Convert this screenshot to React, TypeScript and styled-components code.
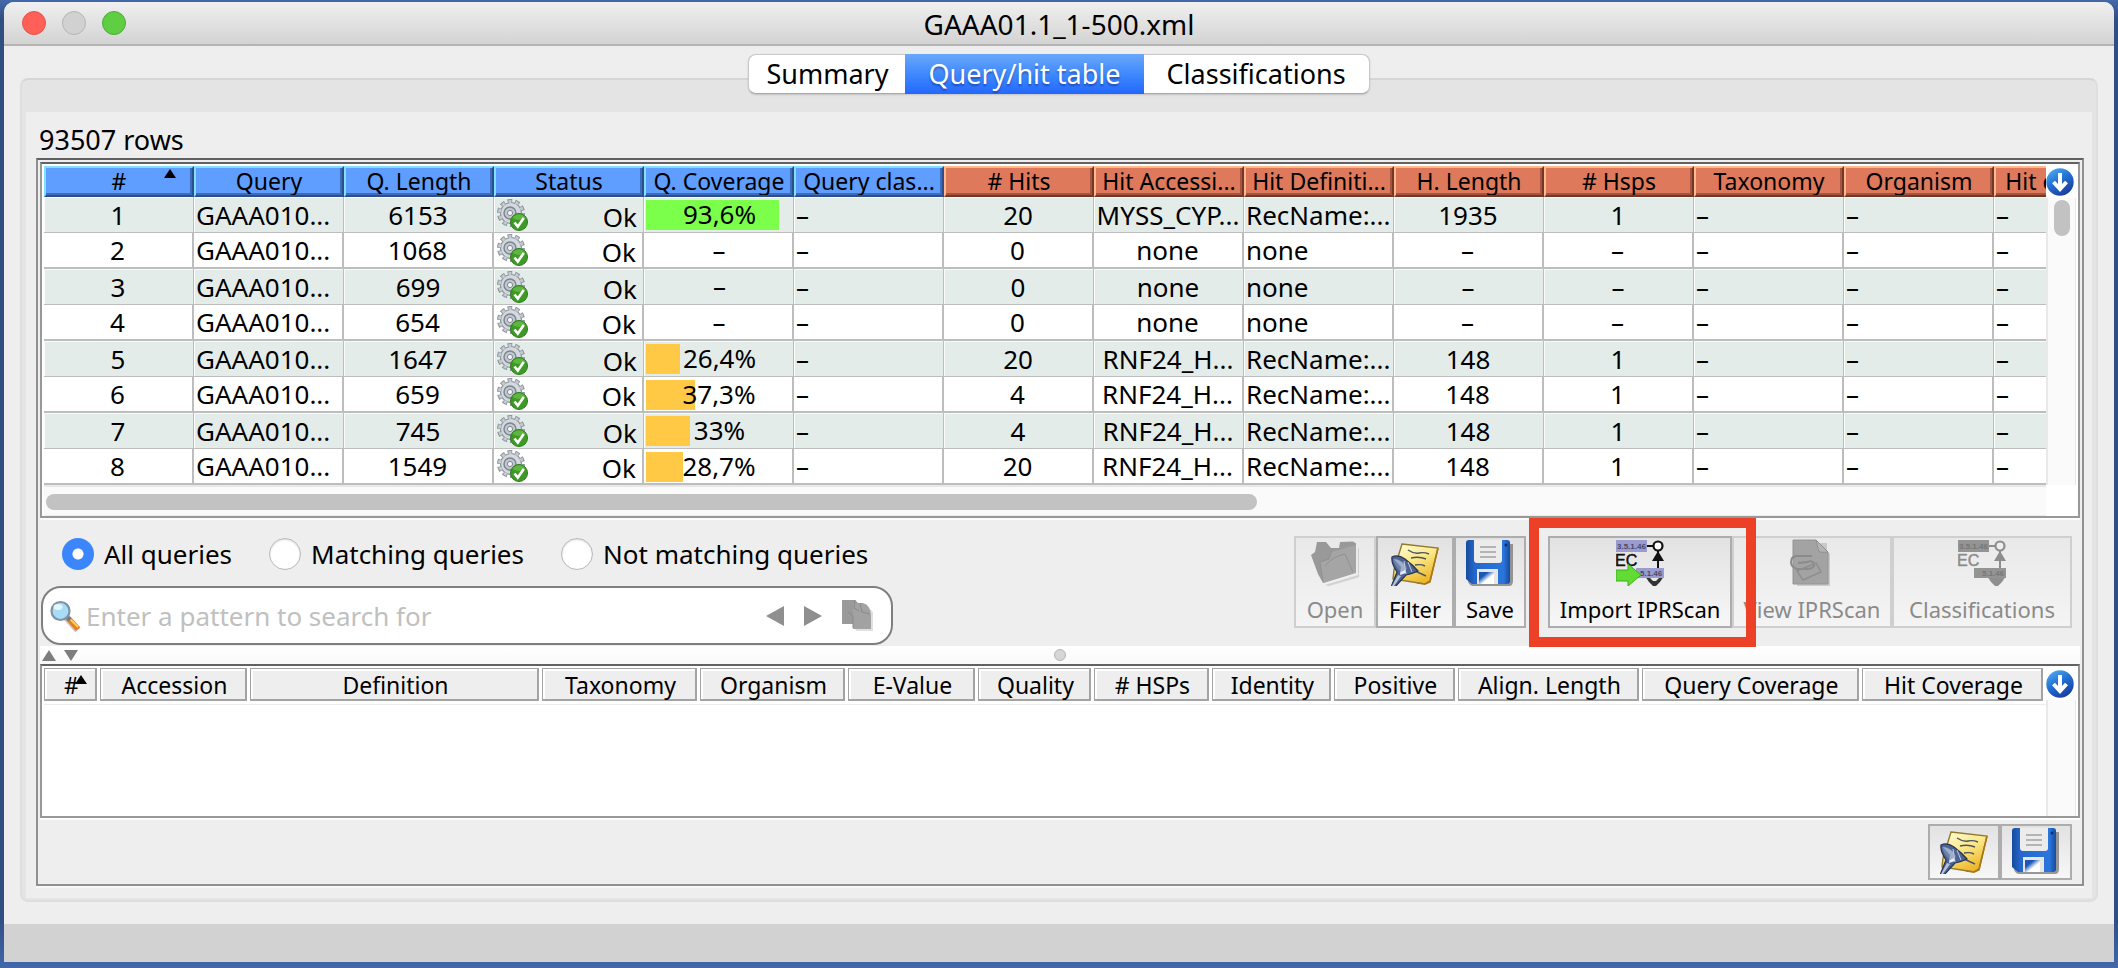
import React, { useState } from 'react';
import styled, { createGlobalStyle, css } from 'styled-components';

const GlobalStyle = createGlobalStyle`
  *, *::before, *::after { box-sizing: border-box; }
  body { margin: 0; font-family: "Noto Sans", "Open Sans", sans-serif; color: #000; }
  button, input { font-family: inherit; color: inherit; margin: 0; }
  svg { display: block; }
`;

const Desktop = styled.div`
  min-height: 100vh;
  padding: 2px 4px 6px;
  display: flex;
  background: linear-gradient(#4569a8 0, #2f4e82 20px, #2f4e82 calc(100% - 50px), #4268ab 100%);
`;

const Window = styled.div`
  flex: 1;
  min-width: 0;
  display: flex;
  flex-direction: column;
  overflow: hidden;
  background: #eeeeee;
  border-radius: 10px 10px 0 0;
`;

const TitleBar = styled.header`
  display: grid;
  grid-template-columns: 1fr auto 1fr;
  align-items: center;
  height: 44px;
  padding: 0 18px;
  background: linear-gradient(#f0f0f0, #d3d3d3);
  border-bottom: 2px solid #b4b4b4;
`;

const Lights = styled.div`
  display: flex;
  gap: 16px;
`;

const Light = styled.button<{ $fill: string; $edge: string }>`
  width: 24px;
  height: 24px;
  padding: 0;
  border-radius: 50%;
  background: ${(p) => p.$fill};
  border: 1px solid ${(p) => p.$edge};
`;

const Title = styled.h1`
  margin: 0;
  padding-top: 2px;
  font-size: 28px;
  font-weight: 400;
  line-height: 36px;
`;

const Body = styled.main`
  flex: 1;
  min-width: 0;
  display: flex;
  flex-direction: column;
  padding: 8px 16px 22px;
`;

const Tabs = styled.div`
  align-self: center;
  position: relative;
  z-index: 1;
  display: flex;
  height: 40px;
  margin-bottom: -16px;
  border-radius: 8px;
  border: 1px solid #c8c8c8;
  border-bottom-color: #a9a9a9;
  box-shadow: 0 1px 2px rgba(0, 0, 0, 0.15);
  background: #fff;
`;

const Tab = styled.button<{ $active?: boolean }>`
  height: 40px;
  margin-top: -1px;
  padding: 0 23px;
  border: 0;
  border-radius: 8px;
  background: transparent;
  font-size: 27px;
  line-height: 40px;
  white-space: nowrap;
  &:first-child { padding: 0 17px; }
  ${(p) =>
    p.$active &&
    css`
      border-radius: 0;
      color: #fff;
      background: linear-gradient(#6ba8fb, #3b86fd 55%, #2468fe);
      text-shadow: 0 2px 2px rgba(0, 0, 60, 0.35);
    `}
`;

const Panel = styled.section`
  flex: 1;
  display: flex;
  flex-direction: column;
  padding: 32px 4px 2px;
  background: #e4e4e4;
  border: 2px solid #dedede;
  border-top-color: #d6d6d6;
  border-radius: 8px;
`;

const PanelBody = styled.div`
  flex: 1;
  display: flex;
  flex-direction: column;
  padding: 10px 8px 12px 10px;
  background: #eeeeee;
`;

const RowCount = styled.p`
  margin: 0;
  padding-left: 3px;
  font-size: 27px;
  line-height: 36px;
`;

const Frame = styled.div`
  flex: 1;
  display: flex;
  flex-direction: column;
  padding: 2px 2px 0;
  border: 2px solid #909090;
  border-top-color: #606060;
  box-shadow: 0 2px 0 #f8f8f8;
`;

const TableBox = styled.div<{ $grow?: boolean }>`
  flex: ${(p) => (p.$grow ? '1' : 'none')};
  display: grid;
  grid-template-columns: minmax(0, 1fr) 30px;
  grid-template-rows: ${(p) => (p.$grow ? 'minmax(0, 1fr)' : 'auto 31px')};
  padding: 2px 2px 0;
  background: #fff;
  border: 2px solid #989898;
  border-top-color: #626262;
  box-shadow: 0 2px 0 #fdfdfd;
  margin-bottom: 2px;
`;

const Viewport = styled.div`
  min-width: 0;
  overflow: hidden;
`;

const HitTable = styled.table`
  width: 2100px;
  table-layout: fixed;
  border-collapse: separate;
  border-spacing: 0;
`;

const tones = {
  query: { base: '#5f9dff', light: '#7fe0ff', mid: '#3f6cba', dark: '#2c4f8c' },
  hit: { base: '#de795b', light: '#ffb98c', mid: '#a45540', dark: '#71382a' },
};

const HitHead = styled.th<{ $tone: 'query' | 'hit' }>`
  position: relative;
  height: 31px;
  padding: 0;
  overflow: hidden;
  font-size: 23px;
  font-weight: 400;
  line-height: 27px;
  white-space: nowrap;
  background: ${(p) => tones[p.$tone].base};
  border: 2px solid ${(p) => tones[p.$tone].dark};
  border-top-color: ${(p) => tones[p.$tone].light};
  border-left-color: ${(p) => tones[p.$tone].light};
  box-shadow: inset -2px -2px 0 ${(p) => tones[p.$tone].mid};
`;

const SortMark = styled.svg<{ $tight?: boolean }>`
  position: absolute;
  top: ${(p) => (p.$tight ? '6px' : '1px')};
  right: ${(p) => (p.$tight ? '8px' : '16px')};
`;

const Cell = styled.td<{ $align?: 'left' | 'right' }>`
  height: 36px;
  padding: 1px 3px 0 2px;
  overflow: hidden;
  font-size: 26px;
  line-height: 33px;
  white-space: nowrap;
  text-align: ${(p) => p.$align ?? 'center'};
  border: 0 solid #bdbdbd;
  border-width: 0 2px 2px 0;
  tr:nth-child(odd) > & {
    background: #e4ecea;
    border-width: 0 1px 1px 0;
    box-shadow: inset 1px 1px 0 #fafcfb;
  }
`;

const StatusCell = styled.div`
  display: flex;
  align-items: flex-start;
  justify-content: space-between;
  height: 33px;
  padding: 0 3px 0 1px;
  line-height: 36px;
`;

const Meter = styled.div`
  position: relative;
  height: 30px;
  margin-right: -3px;
  line-height: 28px;
`;

const MeterFill = styled.div<{ $high: boolean }>`
  position: absolute;
  inset: 0 auto 0 0;
  background: ${(p) => (p.$high ? '#7bff4b' : '#ffc845')};
`;

const MeterText = styled.span`
  position: relative;
`;

const SideRail = styled.div`
  display: flex;
  flex-direction: column;
`;

const ColumnButton = styled.button`
  width: 30px;
  height: 32px;
  padding: 2px 0 2px;
  border: 0;
  background: #fff;
`;

const VTrack = styled.div`
  flex: 1;
  padding: 2px 6px 0 8px;
  background: #fafafa;
  border: solid #e9e9e9;
  border-width: 0 1px 0 2px;
`;

const VThumb = styled.div`
  width: 16px;
  height: 36px;
  margin-left: -2px;
  border-radius: 8px;
  background: #c2c2c2;
`;

const HTrack = styled.div`
  padding: 7px 2px 6px;
  background: #fafafa;
  border-top: 2px solid #e8e8e8;
  border-bottom: 1px solid #ececec;
`;

const HThumb = styled.div`
  width: 60.6%;
  height: 16px;
  border-radius: 8px;
  background: #c2c2c2;
`;

const Controls = styled.div`
  display: flex;
  justify-content: space-between;
  align-items: flex-start;
  height: 126px;
  padding: 16px 8px 0 1px;
`;

const SearchSide = styled.div`
  display: flex;
  flex-direction: column;
  gap: 16px;
  flex: 0 1 852px;
  padding-top: 2px;
`;

const RadioRow = styled.div`
  display: flex;
  gap: 37px;
  height: 32px;
  padding-left: 21px;
`;

const RadioLabel = styled.label`
  display: flex;
  align-items: center;
  gap: 10px;
  font-size: 26px;
  line-height: 32px;
  white-space: nowrap;
`;

const Radio = styled.input`
  appearance: none;
  width: 32px;
  height: 32px;
  border-radius: 50%;
  background: #fff;
  border: 1px solid #b9b9b9;
  box-shadow: inset 0 1px 2px rgba(0, 0, 0, 0.15);
  &:checked {
    border: 0;
    background: radial-gradient(circle, #fff 0 5px, #3c86fc 6px);
    box-shadow: none;
  }
`;

const SearchBox = styled.div`
  display: flex;
  align-items: center;
  height: 59px;
  padding: 0 17px 0 7px;
  background: #fff;
  border: 2px solid #7f7f7f;
  border-radius: 20px;
`;

const SearchInput = styled.input`
  flex: 1;
  min-width: 0;
  height: 40px;
  padding: 0 0 0 5px;
  border: 0;
  outline: 0;
  background: transparent;
  font-size: 26px;
  &::placeholder { color: #c0c0c0; opacity: 1; }
`;

const IconButton = styled.button`
  padding: 0;
  border: 0;
  background: transparent;
`;

const SearchTools = styled.div`
  display: flex;
  align-items: center;
  gap: 20px;
`;

const Toolbar = styled.div`
  display: flex;
  flex: none;
`;

const ToolButton = styled.button<{ $width: number; $short?: boolean }>`
  display: flex;
  flex-direction: column;
  align-items: center;
  gap: 8px;
  width: ${(p) => p.$width}px;
  height: ${(p) => (p.$short ? 56 : 92)}px;
  padding: 0;
  border: 2px solid #adadad;
  background: linear-gradient(#e2e2e2, #f7f7f7);
  font-size: 22px;
  line-height: 30px;
  white-space: nowrap;
  &:disabled {
    color: #8a8a8a;
    border-color: #cfcfcf;
    background: linear-gradient(#e9e9e9, #f4f4f4);
  }
`;

const Highlighted = styled.div`
  position: relative;
  margin-left: 22px;
`;

const HighlightBox = styled.div`
  position: absolute;
  z-index: 2;
  inset: -18px -24px -19px -19px;
  border: 10px solid #ec4027;
  pointer-events: none;
`;

const Splitter = styled.div`
  display: grid;
  grid-template-columns: 1fr auto 1fr;
  align-items: center;
  height: 18px;
  padding: 0 2px;
  background: linear-gradient(#fff, #f9f9f9);
`;

const SplitArrows = styled.div`
  display: flex;
  gap: 8px;
`;

const Knob = styled.span`
  width: 12px;
  height: 12px;
  border-radius: 50%;
  border: 1px solid #b5b5b5;
  background: #d6d6d6;
`;

const HspTable = styled.table`
  width: 100%;
  table-layout: fixed;
  border-collapse: separate;
  border-spacing: 0;
  border-bottom: 1px solid #ededed;
`;

const HspCol = styled.col<{ $share: number }>`
  width: ${(p) => p.$share}%;
`;

const HspHead = styled.th`
  padding: 0 3px 3px 0;
  font-weight: 400;
`;

const HspHeadBox = styled.div`
  position: relative;
  height: 33px;
  padding-left: 3px;
  background: #eeeeee;
  border: solid #a3a3a3;
  border-width: 1px 2px 2px 1px;
  box-shadow: inset 2px 2px 0 #fff;
  font-size: 23px;
  line-height: 32px;
  white-space: nowrap;
`;

const Footer = styled.div`
  display: flex;
  justify-content: flex-end;
  height: 64px;
  padding: 4px 8px 4px 0;
`;

const StatusBar = styled.footer`
  height: 38px;
  background: #d2d2d2;
`;

const GearIcon = () => (
  <svg width="31" height="32" viewBox="0 0 31 32">
    <circle cx="14" cy="14" r="11.5" fill="none" stroke="#8c949c" strokeWidth="5" strokeDasharray="4.5 2.72" />
    <circle cx="14" cy="14" r="10.5" fill="#d4d9de" stroke="#8f98a1" strokeWidth="1.2" />
    <circle cx="14" cy="14" r="11.5" fill="none" stroke="#c3c9cf" strokeWidth="3" strokeDasharray="3 4.22" strokeDashoffset="-0.75" />
    <circle cx="13" cy="14" r="6" fill="#c0c7ce" stroke="#7b8590" strokeWidth="1.4" />
    <circle cx="13" cy="14" r="2.6" fill="#f3f5f7" stroke="#7f8993" />
    <circle cx="22" cy="23" r="8.5" fill="#3d9a24" stroke="#2e7a1c" strokeWidth="1" />
    <path d="M15.5 19a7.5 7.5 0 0 1 13 0q-6 4-13 0z" fill="#6cc04e" opacity=".7" />
    <path d="M17.5 23.5l3.3 4 6-8.5" fill="none" stroke="#fff" strokeWidth="2.6" />
  </svg>
);

const ArrowDownIcon = () => (
  <svg width="28" height="28" viewBox="0 0 28 28">
    <defs>
      <linearGradient id="ball" x1="0" y1="0" x2=".6" y2="1">
        <stop offset="0" stopColor="#58b4f5" />
        <stop offset=".5" stopColor="#2474d6" />
        <stop offset="1" stopColor="#1a3fa0" />
      </linearGradient>
    </defs>
    <circle cx="14" cy="14" r="13.7" fill="url(#ball)" />
    <path d="M14 5v15M7.5 14l6.5 7 6.5-7" fill="none" stroke="#fff" strokeWidth="4" />
  </svg>
);

const FolderIcon = () => (
  <svg width="48" height="48" viewBox="0 0 48 48">
    <path d="M14 47l33-10V10l2 1v28L18 48z" fill="#000" opacity=".12" />
    <path d="M6 4h9l5 6h8l1-6 13-.5 3 2v29L12 45 7 36 0 17l4-3z" fill="#999" />
    <path d="M12 45L9 24l9-3 2-7 8-2 17-5v28z" fill="#a5a5a5" />
    <path d="M12 43L9 24l9-3 3-8M14 28q8-10 20-12l8 18" fill="none" stroke="#919191" />
  </svg>
);

const FilterIcon = () => (
  <svg width="48" height="48" viewBox="0 0 48 48">
    <defs>
      <linearGradient id="note" x1="0" y1="0" x2=".5" y2="1">
        <stop offset="0" stopColor="#fffce0" />
        <stop offset=".5" stopColor="#fbe98a" />
        <stop offset="1" stopColor="#efb92e" />
      </linearGradient>
    </defs>
    <path d="M11 6l36 4-8 34-5 2-32-5 1-9z" fill="url(#note)" stroke="#927a2c" strokeWidth="1.4" />
    <path d="M47 10l-8 33-5 3-8-1" fill="none" stroke="#a9791c" strokeWidth="1.6" />
    <path d="M17 12q6 4 11 3t10 1M20 20q8-2 15 1M24 27q6-1 10 1M24 33l11 5" fill="none" stroke="#4d5560" strokeWidth="1.4" />
    <path d="M1 19q6-3 13 2 8 6 13 12-6 3-12 4L4 49H0l6-15Q0 25 1 19z" fill="#4d6394" stroke="#26344f" strokeWidth="1.2" />
    <path d="M3 21q6 1 10 5l2 9-6 2 1-8z" fill="#e9edf5" />
    <path d="M2 21q3-1 8 2t6 8l-6 3Q3 27 2 21z" fill="#7f91bb" opacity=".7" />
    <path d="M7 37l3 1-7 10-2 0z" fill="#b9c4dc" />
    <path d="M17 24l4 10M13 23l2 13" stroke="#c3cce0" />
  </svg>
);

const SaveIcon = () => (
  <svg width="48" height="48" viewBox="0 0 48 48">
    <defs>
      <linearGradient id="disk" x1="0" y1="0" x2="1" y2="0">
        <stop offset="0" stopColor="#174a9e" />
        <stop offset=".2" stopColor="#2567cc" />
        <stop offset=".85" stopColor="#2a76dc" />
        <stop offset="1" stopColor="#174a9e" />
      </linearGradient>
      <linearGradient id="slot" x1="0" y1="0" x2="1" y2="1">
        <stop offset=".3" stopColor="#1c57b6" />
        <stop offset=".6" stopColor="#fff" />
      </linearGradient>
    </defs>
    <path d="M6 6h41v37q0 5-4 5H7q-3 0-5-4z" fill="#6f6f6f" opacity=".7" />
    <path d="M0 5q0-3 3-3h38q3 0 3 3v38q0 3-3 3H6l-6-5z" fill="url(#disk)" />
    <path d="M8 2h28v20q0 3-3 3H11q-3 0-3-3z" fill="#ececec" />
    <path d="M14 9h16M14 14h16M14 19h16" stroke="#b4b4b4" strokeWidth="2" />
    <path d="M11 31h21v15H11z" fill="#e6e6e6" />
    <path d="M13 34h15v12H13z" fill="url(#slot)" />
    <circle cx="40" cy="7" r="1.5" fill="#0b2f70" />
  </svg>
);

const EcIcon = ({ gray, arrow }: { gray?: boolean; arrow?: boolean }) => {
  const ink = gray ? '#8d8d8d' : '#111';
  const plate = gray ? '#949494' : '#9a9cd0';
  const code = gray ? '#777' : '#4a4a6a';
  return (
    <svg width="48" height="48" viewBox="0 0 48 48" fontFamily="Liberation Sans, sans-serif">
      <rect x="0" y="2" width="31" height="12" fill={plate} />
      <text x="1" y="11" fontSize="8" fontWeight="700" fill={code}>3.5.1.46</text>
      <path d="M31 8h6M42 13v17" stroke={ink} strokeWidth="2" />
      <circle cx="42" cy="8" r="4.5" fill={gray ? '#eee' : '#fff'} stroke={ink} strokeWidth="2.2" />
      <path d="M42 13l6 10H36z" fill={ink} />
      <text x="-1" y="28" fontSize="16" fill={ink} stroke={ink} strokeWidth=".5">EC</text>
      <path d="M29 38h19l-4 6-4 4h-3l-4-4z" fill={gray ? '#8f8f8f' : '#333'} />
      {!gray && <path d="M33 39h11l-4 4h-3z" fill="#e8e8e8" />}
      <rect x={gray ? 16 : 20} y="30" width={gray ? 32 : 28} height="10" fill={plate} />
      <text x="24" y="38" fontSize="8" fontWeight="700" fill={code}>5.1.46</text>
      {arrow && <path d="M0 32h12v-6l13 11-13 11v-5H0z" fill="#62dc35" stroke="#3fae1c" />}
    </svg>
  );
};

const DocumentIcon = () => (
  <svg width="48" height="48" viewBox="0 0 48 48">
    <path d="M9 5h30v8l3 3v32H9z" fill="#000" opacity=".14" />
    <path d="M5 2h23l12 12v32H5z" fill="#a3a3a3" stroke="#949494" />
    <path d="M28 2l12 12q-8 1-9-1t-3-11z" fill="#b4b4b4" stroke="#8f8f8f" />
    <path d="M24 18H8q-5 1-5 6t6 7h11q7-1 6-5t-7-2l-9 1" fill="none" stroke="#8b8b8b" strokeWidth="2" />
    <path d="M9 33l19-8 5 9-18 8z" fill="none" stroke="#8e8e8e" strokeWidth="1.5" />
  </svg>
);

const MagnifierIcon = () => (
  <svg width="31" height="32" viewBox="0 0 31 32">
    <path d="M16 17l12 13" stroke="#8a8a8a" strokeWidth="7" opacity=".5" />
    <path d="M18 18l10 11" stroke="#e87d24" strokeWidth="5.5" />
    <path d="M18 17l10 10" stroke="#ffd05a" strokeWidth="1.8" />
    <path d="M15 15l5 5" stroke="#777" strokeWidth="4" />
    <circle cx="10.5" cy="11" r="9" fill="#a8dbf5" stroke="#7d93a5" strokeWidth="2.2" />
    <ellipse cx="8" cy="7" rx="4.5" ry="3" fill="#e4f6ff" />
  </svg>
);

const TriangleIcon = ({ d, width, height, fill = '#8f8f8f' }: { d: string; width: number; height: number; fill?: string }) => (
  <svg width={width} height={height}>
    <path d={d} fill={fill} />
  </svg>
);

const CopyIcon = () => (
  <svg width="32" height="31" viewBox="0 0 32 31">
    <path d="M4 4h20l7 8v19H14z" fill="#000" opacity=".12" />
    <path d="M0 0h13l6 6v18H0z" fill="#9a9a9a" />
    <path d="M11 3h10q7 2 8 12v14H11z" fill="#a2a2a2" />
    <path d="M11 28V16l-5-4M18 3l2 9 8 2M13 0l-1 8 5 3" fill="none" stroke="#8a8a8a" />
  </svg>
);

const queryColumns = ['#', 'Query', 'Q. Length', 'Status', 'Q. Coverage', 'Query clas...'];
const hitColumns = ['# Hits', 'Hit Accessi...', 'Hit Definiti...', 'H. Length', '# Hsps', 'Taxonomy', 'Organism', 'Hit classifi...'];

type Row = { length: number; coverage?: number; hits: number; accession?: string; hitLength?: number };

const rows: Row[] = [
  { length: 6153, coverage: 93.6, hits: 20, accession: 'MYSS_CYP...', hitLength: 1935 },
  { length: 1068, hits: 0 },
  { length: 699, hits: 0 },
  { length: 654, hits: 0 },
  { length: 1647, coverage: 26.4, hits: 20, accession: 'RNF24_H...', hitLength: 148 },
  { length: 659, coverage: 37.3, hits: 4, accession: 'RNF24_H...', hitLength: 148 },
  { length: 745, coverage: 33, hits: 4, accession: 'RNF24_H...', hitLength: 148 },
  { length: 1549, coverage: 28.7, hits: 20, accession: 'RNF24_H...', hitLength: 148 },
];

const hspColumns: [string, number][] = [
  ['#', 56], ['Accession', 150], ['Definition', 292], ['Taxonomy', 158], ['Organism', 148],
  ['E-Value', 130], ['Quality', 116], ['# HSPs', 118], ['Identity', 122], ['Positive', 124],
  ['Align. Length', 184], ['Query Coverage', 220], ['Hit Coverage', 184],
];
const hspTotal = hspColumns.reduce((sum, [, w]) => sum + w, 0);

const Coverage = ({ value }: { value?: number }) => (
  <Meter>
    {value !== undefined && <MeterFill $high={value > 50} style={{ width: `calc(${value}% - 5px)` }} />}
    <MeterText>{value === undefined ? '–' : `${String(value).replace('.', ',')}%`}</MeterText>
  </Meter>
);

const SortArrow = ({ tight }: { tight?: boolean }) => (
  <SortMark $tight={tight} width="12" height="9">
    <path d="M6 0l6 9H0z" />
  </SortMark>
);

export default function App() {
  const [filter, setFilter] = useState('All queries');
  return (
    <>
      <GlobalStyle />
      <Desktop>
        <Window>
          <TitleBar>
            <Lights>
              <Light aria-label="Close" $fill="#fe5f57" $edge="#e9524a" />
              <Light aria-label="Minimize" $fill="#d1d1d1" $edge="#b5b5b5" />
              <Light aria-label="Zoom" $fill="#5fce43" $edge="#4dac37" />
            </Lights>
            <Title>GAAA01.1_1-500.xml</Title>
          </TitleBar>
          <Body>
            <Tabs role="tablist">
              <Tab role="tab">Summary</Tab>
              <Tab role="tab" aria-selected $active>Query/hit table</Tab>
              <Tab role="tab">Classifications</Tab>
            </Tabs>
            <Panel>
              <PanelBody>
                <RowCount>93507 rows</RowCount>
                <Frame>
                  <TableBox>
                    <Viewport>
                      <HitTable>
                        <thead>
                          <tr>
                            {queryColumns.map((name, i) => (
                              <HitHead key={name} $tone="query">
                                {name}
                                {i === 0 && <SortArrow />}
                              </HitHead>
                            ))}
                            {hitColumns.map((name) => (
                              <HitHead key={name} $tone="hit">{name}</HitHead>
                            ))}
                          </tr>
                        </thead>
                        <tbody>
                          {rows.map((row, i) => (
                            <tr key={i}>
                              <Cell>{i + 1}</Cell>
                              <Cell $align="left">GAAA010...</Cell>
                              <Cell>{row.length}</Cell>
                              <Cell>
                                <StatusCell>
                                  <GearIcon />
                                  Ok
                                </StatusCell>
                              </Cell>
                              <Cell>
                                <Coverage value={row.coverage} />
                              </Cell>
                              <Cell $align="left">–</Cell>
                              <Cell>{row.hits}</Cell>
                              <Cell>{row.accession ?? 'none'}</Cell>
                              <Cell $align="left">{row.accession ? 'RecName:...' : 'none'}</Cell>
                              <Cell>{row.hitLength ?? '–'}</Cell>
                              <Cell>{row.hitLength ? 1 : '–'}</Cell>
                              <Cell $align="left">–</Cell>
                              <Cell $align="left">–</Cell>
                              <Cell $align="left">–</Cell>
                            </tr>
                          ))}
                        </tbody>
                      </HitTable>
                    </Viewport>
                    <SideRail>
                      <ColumnButton aria-label="Choose columns"><ArrowDownIcon /></ColumnButton>
                      <VTrack><VThumb /></VTrack>
                    </SideRail>
                    <HTrack><HThumb /></HTrack>
                  </TableBox>
                  <Controls>
                    <SearchSide>
                      <RadioRow>
                        {['All queries', 'Matching queries', 'Not matching queries'].map((name) => (
                          <RadioLabel key={name}>
                            <Radio type="radio" name="filter" checked={filter === name} onChange={() => setFilter(name)} />
                            {name}
                          </RadioLabel>
                        ))}
                      </RadioRow>
                      <SearchBox>
                        <MagnifierIcon />
                        <SearchInput aria-label="Search pattern" placeholder="Enter a pattern to search for" />
                        <SearchTools>
                          <IconButton aria-label="Previous"><TriangleIcon width={18} height={20} d="M0 10L18 0v20z" /></IconButton>
                          <IconButton aria-label="Next"><TriangleIcon width={18} height={20} d="M18 10L0 0v20z" /></IconButton>
                          <IconButton aria-label="Copy"><CopyIcon /></IconButton>
                        </SearchTools>
                      </SearchBox>
                    </SearchSide>
                    <Toolbar>
                      <ToolButton $width={82} disabled><FolderIcon />Open</ToolButton>
                      <ToolButton $width={78}><FilterIcon />Filter</ToolButton>
                      <ToolButton $width={72}><SaveIcon />Save</ToolButton>
                      <Highlighted>
                        <ToolButton $width={184}><EcIcon arrow />Import IPRScan</ToolButton>
                        <HighlightBox />
                      </Highlighted>
                      <ToolButton $width={160} disabled><DocumentIcon />View IPRScan</ToolButton>
                      <ToolButton $width={180} disabled><EcIcon gray />Classifications</ToolButton>
                    </Toolbar>
                  </Controls>
                  <Splitter>
                    <SplitArrows>
                      <TriangleIcon width={14} height={11} d="M7 0l7 11H0z" fill="#7d7d7d" />
                      <TriangleIcon width={14} height={11} d="M7 11l7-11H0z" fill="#7d7d7d" />
                    </SplitArrows>
                    <Knob />
                  </Splitter>
                  <TableBox $grow>
                    <Viewport>
                      <HspTable>
                        <colgroup>
                          {hspColumns.map(([name, width]) => (
                            <HspCol key={name} $share={(width / hspTotal) * 100} />
                          ))}
                        </colgroup>
                        <thead>
                          <tr>
                            {hspColumns.map(([name], i) => (
                              <HspHead key={name}>
                                <HspHeadBox>
                                  {name}
                                  {i === 0 && <SortArrow tight />}
                                </HspHeadBox>
                              </HspHead>
                            ))}
                          </tr>
                        </thead>
                      </HspTable>
                    </Viewport>
                    <SideRail>
                      <ColumnButton aria-label="Choose hit columns"><ArrowDownIcon /></ColumnButton>
                      <VTrack />
                    </SideRail>
                  </TableBox>
                  <Footer>
                    <ToolButton $width={72} $short aria-label="Filter hits"><FilterIcon /></ToolButton>
                    <ToolButton $width={72} $short aria-label="Save hits"><SaveIcon /></ToolButton>
                  </Footer>
                </Frame>
              </PanelBody>
            </Panel>
          </Body>
          <StatusBar />
        </Window>
      </Desktop>
    </>
  );
}
